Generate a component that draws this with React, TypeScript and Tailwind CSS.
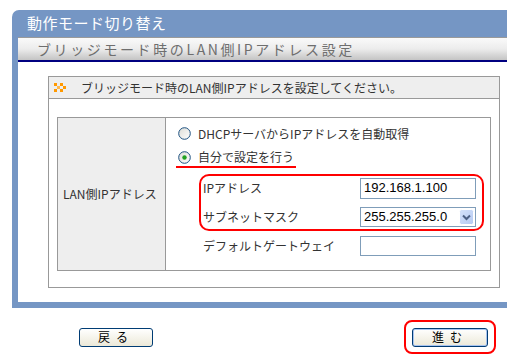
import React from "react";

const jp = "font-['Noto_Sans_CJK_JP','Noto_Sans',sans-serif]";

function Radio({ checked }: { checked?: boolean }) {
  return (
    <svg width="13" height="13" viewBox="0 0 13 13" className="shrink-0">
      <defs>
        <linearGradient id={checked ? "rg1" : "rg0"} x1="0" y1="0" x2="1" y2="1">
          <stop offset="0" stopColor="#dcdcd6" />
          <stop offset="1" stopColor="#ffffff" />
        </linearGradient>
      </defs>
      <circle cx="6.5" cy="6.5" r="5.8" fill={`url(#${checked ? "rg1" : "rg0"})`} stroke="#1c5180" strokeWidth="1" />
      {checked && <circle cx="6.5" cy="6.5" r="2.2" fill="#21a121" />}
    </svg>
  );
}

function DropArrow() {
  return (
    <svg width="15" height="16" viewBox="0 0 15 16" className="shrink-0">
      <defs>
        <linearGradient id="da" x1="0" y1="0" x2="1" y2="1">
          <stop offset="0" stopColor="#d6e3fb" />
          <stop offset="1" stopColor="#b4c9f2" />
        </linearGradient>
      </defs>
      <rect x="0.5" y="0.5" width="14" height="15" rx="2" fill="url(#da)" stroke="#ffffff" />
      <path d="M4 6.5 L7.5 10 L11 6.5" fill="none" stroke="#4d6185" strokeWidth="2" />
    </svg>
  );
}

function Btn({ label, focus }: { label: string; focus?: boolean }) {
  return (
    <button
      className={`h-[19px] rounded-[3px] border border-[#003c74] bg-gradient-to-b from-white to-[#ece9d8] text-[12px] text-black tracking-[6px] flex items-center justify-center ${jp} ${
        focus ? "w-[76px] shadow-[inset_0_0_0_1px_#a8c4f0]" : "w-[74px]"
      }`}
    >
      {label}
    </button>
  );
}

export default function App() {
  return (
    <div className={`w-[507px] h-[364px] bg-white overflow-hidden ${jp}`}>
      <div className="pt-[10px] pl-[12px]">
        <div className="bg-[#7596c4] rounded-tl-[7px] pl-[6px] pb-[6px]">
          <div className="h-[27px] -ml-[6px] pl-[15px] flex items-center text-white text-[15px] tracking-[0.5px]">
            動作モード切り替え
          </div>
          <div className="h-[23px] border-t border-[#9a9a9a] bg-gradient-to-b from-[#fafafa] via-[#ececec] to-[#c4c4c4] flex items-center pl-[19px] text-[14px] text-[#6e6e6e] tracking-[2.6px]">
            ブリッジモード時のLAN側IPアドレス設定
          </div>
          <div className="h-[2px] bg-[#000080]" />
          <div className="bg-white h-[240px] pt-[14px] pl-[30px] pr-[7px]">
            <div className="border border-[#999999] h-[212px]">
              <div className="h-[22px] bg-[#eeeeee] border-b border-[#999999] flex items-center pl-[5px] text-[12px] text-[#333333]">
                <svg width="14" height="9" viewBox="0 0 14 9" className="mr-[13px]">
                  <rect x="0" y="0" width="3" height="3" fill="#ff9900" />
                  <rect x="6" y="0" width="3" height="3" fill="#ff9900" />
                  <rect x="3" y="3" width="3" height="3" fill="#ffb84d" />
                  <rect x="9" y="3" width="3" height="3" fill="#ff9900" />
                  <rect x="0" y="6" width="3" height="3" fill="#ff9900" />
                  <rect x="6" y="6" width="3" height="3" fill="#ff9900" />
                </svg>
                ブリッジモード時のLAN側IPアドレスを設定してください。
              </div>
              <div className="pt-[18px] pl-[8px] pr-[8px]">
                <div className="border border-[#999999] h-[154px] flex text-[12px] text-[#333333]">
                  <div className="w-[108px] bg-[#eeeeee] border-r border-[#999999] flex items-center pl-[5px]">
                    LAN側IPアドレス
                  </div>
                  <div className="flex-1 pt-[3px]">
                    <div className="h-[25px] ml-[10px] pl-[2px] flex items-center gap-[7px]">
                      <Radio />
                      <span>DHCPサーバからIPアドレスを自動取得</span>
                    </div>
                    <div className="mt-[2px] h-[20px] w-[120px] ml-[10px] pl-[2px] border-b-2 border-[#ff0000] flex items-center gap-[7px]">
                      <Radio checked />
                      <span>自分で設定を行う</span>
                    </div>
                    <div className="mt-[6px] ml-[33px] w-[285px] h-[57px] border-2 border-[#ff0000] rounded-[10px] pt-[1px]">
                      <div className="h-[22px] flex items-center">
                        <span className="w-[159px] pl-[2px]">IPアドレス</span>
                        <div className="w-[116px] h-[21px] border border-[#7f9db9] bg-white flex items-center pl-[3px] text-[13px] text-black font-['Liberation_Sans',Arial,sans-serif]">
                          192.168.1.100
                        </div>
                      </div>
                      <div className="mt-[7px] h-[22px] flex items-center">
                        <span className="w-[159px] pl-[2px]">サブネットマスク</span>
                        <div className="w-[116px] h-[20px] border border-[#7f9db9] bg-white flex items-center justify-between pl-[3px] pr-[1px] text-[13px] text-black font-['Liberation_Sans',Arial,sans-serif]">
                          255.255.255.0
                          <DropArrow />
                        </div>
                      </div>
                    </div>
                    <div className="mt-[5px] ml-[35px] h-[20px] flex items-center">
                      <span className="w-[159px] pl-[2px]">デフォルトゲートウェイ</span>
                      <div className="w-[116px] h-[20px] border border-[#7f9db9] bg-white" />
                    </div>
                  </div>
                </div>
              </div>
            </div>
          </div>
        </div>
      </div>
      <div className="flex items-center pt-[12px] pl-[79px] pr-[11px] justify-between">
        <Btn label="戻る" />
        <div className="p-[6px] border-2 border-[#ff0000] rounded-[8px] w-[92px] h-[34px] flex items-center justify-center">
          <Btn label="進む" focus />
        </div>
      </div>
    </div>
  );
}
